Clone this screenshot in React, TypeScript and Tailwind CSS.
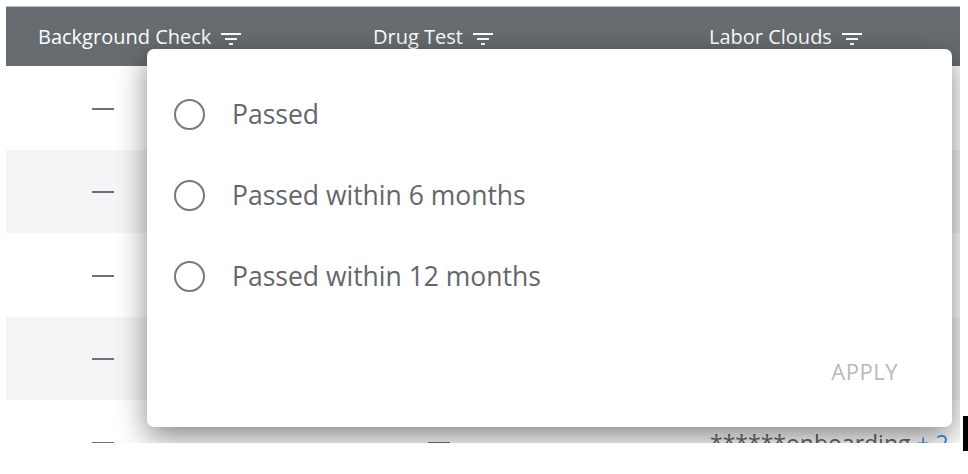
import React from "react"

const font = { fontFamily: '"Open Sans", "Noto Sans", sans-serif' }

function FilterIcon() {
  return (
    <svg width="20" height="14" viewBox="0 0 20 14" className="ml-[10px] mt-[4px]">
      <rect x="0" y="1" width="20" height="2" fill="#fff" />
      <rect x="4" y="6" width="12" height="2" fill="#fff" />
      <rect x="8" y="11" width="4" height="2" fill="#fff" />
    </svg>
  )
}

function Dash() {
  return <div className="w-[22px] h-[2px] mt-[2px] bg-[#6c7175]" />
}

const rows = [0, 1, 2, 3, 4]
const options = ["Passed", "Passed within 6 months", "Passed within 12 months"]

export default function App() {
  return (
    <div className="w-[968px] h-[474px] bg-white relative overflow-hidden" style={font}>
      <div className="ml-[6px] mt-[6px] w-[954px] h-[437px] overflow-hidden relative">
        <div className="grid grid-cols-[290px_330px_334px] h-[60px] bg-[#676c70] border-t border-[#b9bcbe] text-white text-[20px]">
          <div className="flex items-center pl-[32px]">
            Background Check <FilterIcon />
          </div>
          <div className="flex items-center pl-[77px]">
            Drug Test <FilterIcon />
          </div>
          <div className="flex items-center pl-[83px]">
            Labor Clouds <FilterIcon />
          </div>
        </div>
        {rows.map((r) => (
          <div
            key={r}
            className={`grid grid-cols-[290px_330px_334px] h-[83.5px] ${r % 2 === 1 ? "bg-[#f4f5f7]" : "bg-white"}`}
          >
            <div className="flex items-center pl-[86px]">
              <Dash />
            </div>
            <div className="flex items-center pl-[132px]">
              <Dash />
            </div>
            <div className="flex items-center pl-[84px] text-[23px] text-[#62676b] whitespace-nowrap">
              {r === 4 && (
                <span className="mt-[2px]">
                  ******onboarding <span className="text-[#3d8fd8]">+ 2</span>
                </span>
              )}
            </div>
          </div>
        ))}

        <div className="absolute left-[141px] top-[43px] w-[805px] h-[378px] bg-white rounded-[7px] shadow-[0_10px_30px_rgba(0,0,0,0.48)] flex flex-col">
          <div className="flex flex-col pt-[50px] pl-[27px] gap-[50px]">
            {options.map((o) => (
              <div key={o} className="flex items-center h-[31px]">
                <div className="w-[31px] h-[31px] rounded-full border-[2.5px] border-[#77797b]" />
                <span className="ml-[27px] text-[26.5px] text-[#62676b] leading-none">{o}</span>
              </div>
            ))}
          </div>
          <div className="mt-auto mb-[39px] pr-[54px] flex justify-end">
            <span className="text-[22px] text-[#b9b9b9] tracking-[0.5px]">APPLY</span>
          </div>
        </div>
      </div>
      <div className="absolute left-[963px] top-[416px] w-[5px] h-[35px] bg-black" />
    </div>
  )
}
